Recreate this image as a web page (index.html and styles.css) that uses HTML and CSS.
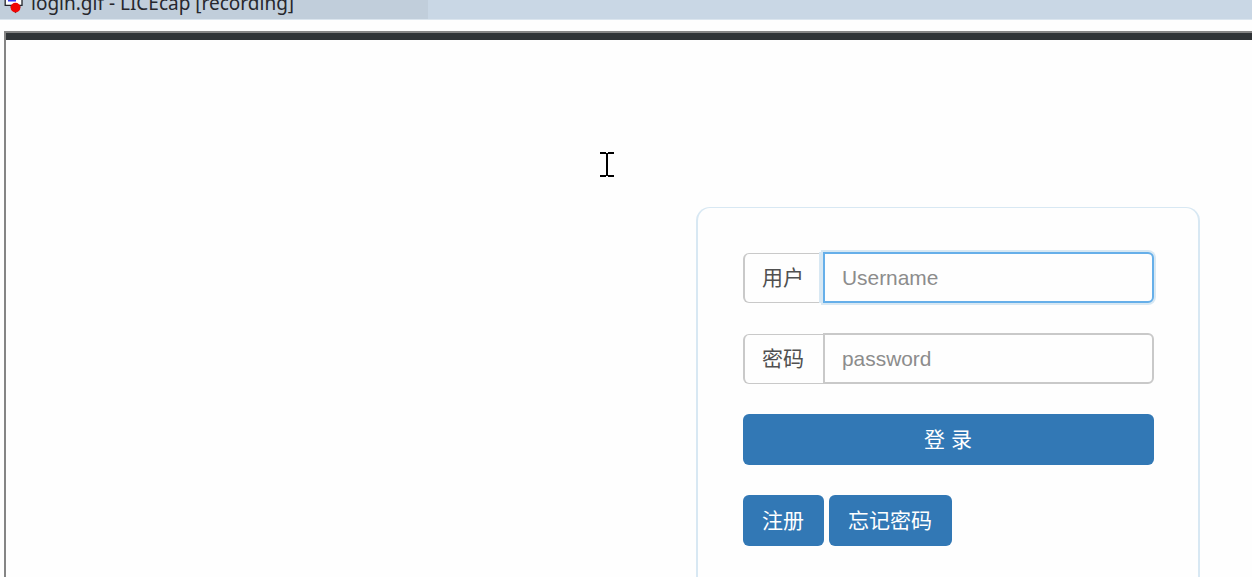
FILE: index.html
```html
<!DOCTYPE html>
<html lang="zh-CN">
<head>
<meta charset="utf-8">
<title>登录</title>
<link rel="stylesheet" href="styles.css">
</head>
<body>
<div class="titlebar">
  <div class="title-main">
    <svg class="app-icon" width="24" height="14" viewBox="0 0 24 14">
      <path d="M5 0H22V5.5H5Z" fill="#fff"/>
      <path d="M5.2 0V5.3H22V0" fill="none" stroke="#26262c" stroke-width="1.3"/>
      <path d="M8 0H16V1.5H8Z" fill="#3434f0"/>
      <path d="M10 6.5L15.5 13.2L21 6.5Z" fill="#333"/>
      <circle cx="15.5" cy="7.6" r="4.9" fill="#f00505"/>
    </svg>
    <span class="title-text">login.gif - LICEcap [recording]</span>
  </div>
</div>
<main class="frame">
  <div class="navbar"></div>
  <form class="card">
    <div class="group">
      <label class="addon" for="user">用户</label>
      <input class="field focused" id="user" type="text" placeholder="Username">
    </div>
    <div class="group">
      <label class="addon" for="pass">密码</label>
      <input class="field" id="pass" type="password" placeholder="password">
    </div>
    <button class="btn login" type="button">登 录</button>
    <div class="actions">
      <button class="btn register" type="button">注册</button>
      <button class="btn forgot" type="button">忘记密码</button>
    </div>
  </form>
</main>
<svg class="cursor" width="14" height="25" viewBox="0 0 14 25" shape-rendering="crispEdges">
  <path d="M0 0H6V1H8V0H14V2H8V23H14V25H8V24H6V25H0V23H6V2H0Z"/>
</svg>
</body>
</html>
```
FILE: styles.css
```css
* { box-sizing: border-box; }
body {
  margin: 0;
  height: 577px;
  overflow: hidden;
  background: #fefefe;
  font-family: "Liberation Sans", "Noto Sans CJK SC", sans-serif;
}
.titlebar {
  height: 20px;
  background: #c9d7e5;
  border-bottom: 1px solid #dbe5ee;
}
.title-main {
  display: flex;
  width: 428px;
  height: 19px;
  background: #c1cedb;
}
.app-icon { flex: none; margin-right: 7px; }
.title-text {
  margin-top: -10px;
  font: 19px/26px "Noto Sans", sans-serif;
  color: #27272d;
  white-space: nowrap;
}
.frame {
  height: 546px;
  margin: 11px 0 0 4px;
  border: solid #858585;
  border-width: 2px 0 0 2px;
}
.navbar {
  height: 7px;
  background: #303437;
}
.card {
  width: 504px;
  height: 370px;
  margin: 167px 0 0 690px;
  padding: 44px 44px 0 45px;
  border: solid #d8e8f3;
  border-width: 1px 2px 0;
  border-radius: 14px 14px 0 0;
}
.group {
  display: flex;
  height: 51px;
  margin-bottom: 30px;
}
.addon {
  width: 80px;
  height: 50px;
  margin-top: 1px;
  padding-left: 17px;
  border: solid #c9c9c9;
  border-width: 1px 0 1px 2px;
  border-radius: 6px 0 0 6px;
  font-size: 21px;
  line-height: 48px;
  color: #505050;
}
.field {
  width: 331px;
  height: 51px;
  padding: 0 17px;
  border: 2px solid #c9c9c9;
  border-radius: 0 6px 6px 0;
  background: #fefefe;
  font: 20.9px "Liberation Sans", sans-serif;
  outline: 0;
}
.field::placeholder { color: #8c8c8c; opacity: 1; }
.focused {
  border-color: #66afe9;
  box-shadow: 0 0 0 2px #d8e8f3, -4px 0 0 #d8e8f3;
}
.btn {
  height: 51px;
  padding: 0 1px 4px 0;
  border: 0;
  border-radius: 6px;
  background: #3278b5;
  color: #fff;
  font: 21px "Liberation Sans", "Noto Sans CJK SC", sans-serif;
}
.login { width: 411px; }
.actions {
  display: flex;
  gap: 5px;
  margin-top: 30px;
}
.register { width: 81px; }
.forgot { width: 123px; }
.cursor {
  position: absolute;
  left: 600px;
  top: 152px;
}
```
